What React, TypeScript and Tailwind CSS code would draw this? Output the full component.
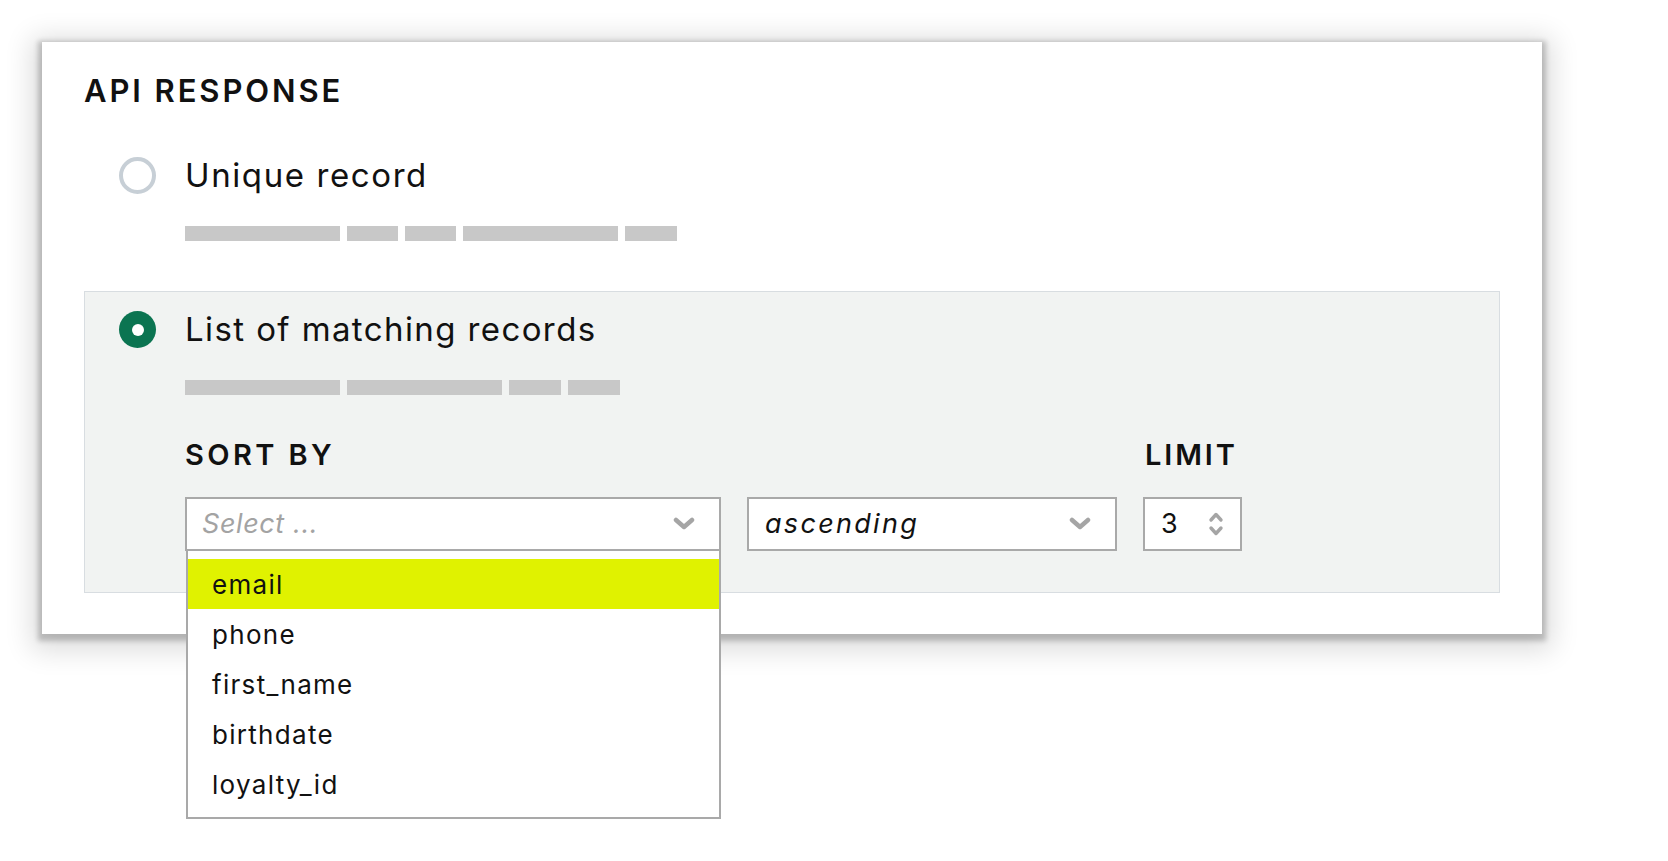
const sortFields = ["email", "phone", "first_name", "birthdate", "loyalty_id"];

function Chevron({ className = "" }: { className?: string }) {
  return (
    <svg viewBox="0 0 22 14" className={className} fill="none">
      <polyline points="3,3 11,10 19,3" stroke="#a5a5a5" strokeWidth="4.5" strokeLinecap="round" strokeLinejoin="round" />
    </svg>
  );
}

function Spinner() {
  return (
    <svg viewBox="0 0 16 30" className="w-[16px] h-[30px]" fill="none">
      <polyline points="3,11 8,5.5 13,11" stroke="#a5a5a5" strokeWidth="3.4" strokeLinecap="round" strokeLinejoin="round" />
      <polyline points="3,19 8,24.5 13,19" stroke="#a5a5a5" strokeWidth="3.4" strokeLinecap="round" strokeLinejoin="round" />
    </svg>
  );
}

function Bars({ widths }: { widths: number[] }) {
  return (
    <div className="flex gap-[7px] ml-[66px]">
      {widths.map((w, i) => (
        <div key={i} className="h-[15px] bg-[#c8c8c8]" style={{ width: w }} />
      ))}
    </div>
  );
}

export default function App() {
  return (
    <div className="min-h-screen bg-white pt-[42px] pl-[42px] text-[#111] font-['Inter',sans-serif]">
      <div className="w-[1500px] bg-white shadow-[0_3px_5px_4px_rgba(0,0,0,0.2),0_6px_26px_10px_rgba(0,0,0,0.14)] px-[42px] pt-[33px] pb-[41px]">
        <h2 className="text-[31px] leading-[32px] font-semibold tracking-[2.9px]">API RESPONSE</h2>

        {/* unique record */}
        <div className="mt-[50px] pl-[35px] pb-[50px]">
          <div className="flex items-center gap-[29px] h-[37px]">
            <div className="w-[37px] h-[37px] rounded-full border-[4px] border-[#c7cfd6] bg-white" />
            <span className="text-[33px] leading-none tracking-[1.6px]">Unique record</span>
          </div>
          <div className="mt-[32px]">
            <Bars widths={[155, 51, 51, 155, 52]} />
          </div>
        </div>

        {/* list of matching records */}
        <div className="border border-[#d8dde1] bg-[#f1f3f2] pl-[34px] pt-[19px] pb-[41px]">
          <div className="flex items-center gap-[29px] h-[37px]">
            <div className="w-[37px] h-[37px] rounded-full bg-[#0b7451] flex items-center justify-center">
              <div className="w-[12px] h-[12px] rounded-full bg-white" />
            </div>
            <span className="text-[33px] leading-none tracking-[1.4px]">List of matching records</span>
          </div>
          <div className="mt-[32px]">
            <Bars widths={[155, 155, 52, 52]} />
          </div>

          <div className="flex items-end gap-[26px] ml-[66px] mt-[45px]">
            <div className="flex flex-col">
              <span className="text-[29px] leading-none font-semibold tracking-[3.4px] mb-[28px]">SORT BY</span>
              <div className="relative">
                <div className="w-[536px] h-[54px] border-2 border-[#a9a9a9] bg-white flex items-center justify-between pl-[15px] pr-[24px]">
                  <span className="italic text-[27px] text-[#a3a3a3] tracking-[0.6px]">Select ...</span>
                  <Chevron className="w-[22px] h-[14px]" />
                </div>
                <div className="absolute left-[1px] top-[54px] w-[535px] border-2 border-t-0 border-[#a9a9a9] bg-white py-[8px] z-10">
                  {sortFields.map((f, i) => (
                    <div
                      key={f}
                      className={`h-[50px] flex items-center pl-[24px] text-[26px] tracking-[1.3px] ${i === 0 ? "bg-[#e0f200]" : ""}`}
                    >
                      {f}
                    </div>
                  ))}
                </div>
              </div>
            </div>

            <div className="w-[370px] h-[54px] border-2 border-[#a9a9a9] bg-white flex items-center justify-between pl-[16px] pr-[24px]">
              <span className="italic text-[27px] tracking-[2.3px]">ascending</span>
              <Chevron className="w-[22px] h-[14px]" />
            </div>

            <div className="flex flex-col">
              <span className="text-[29px] leading-none font-semibold tracking-[2.9px] mb-[28px] ml-[2px]">LIMIT</span>
              <div className="w-[99px] h-[54px] border-2 border-[#a9a9a9] bg-white flex items-center justify-between pl-[16px] pr-[16px]">
                <span className="text-[27px]">3</span>
                <Spinner />
              </div>
            </div>
          </div>
        </div>
      </div>
    </div>
  );
}
